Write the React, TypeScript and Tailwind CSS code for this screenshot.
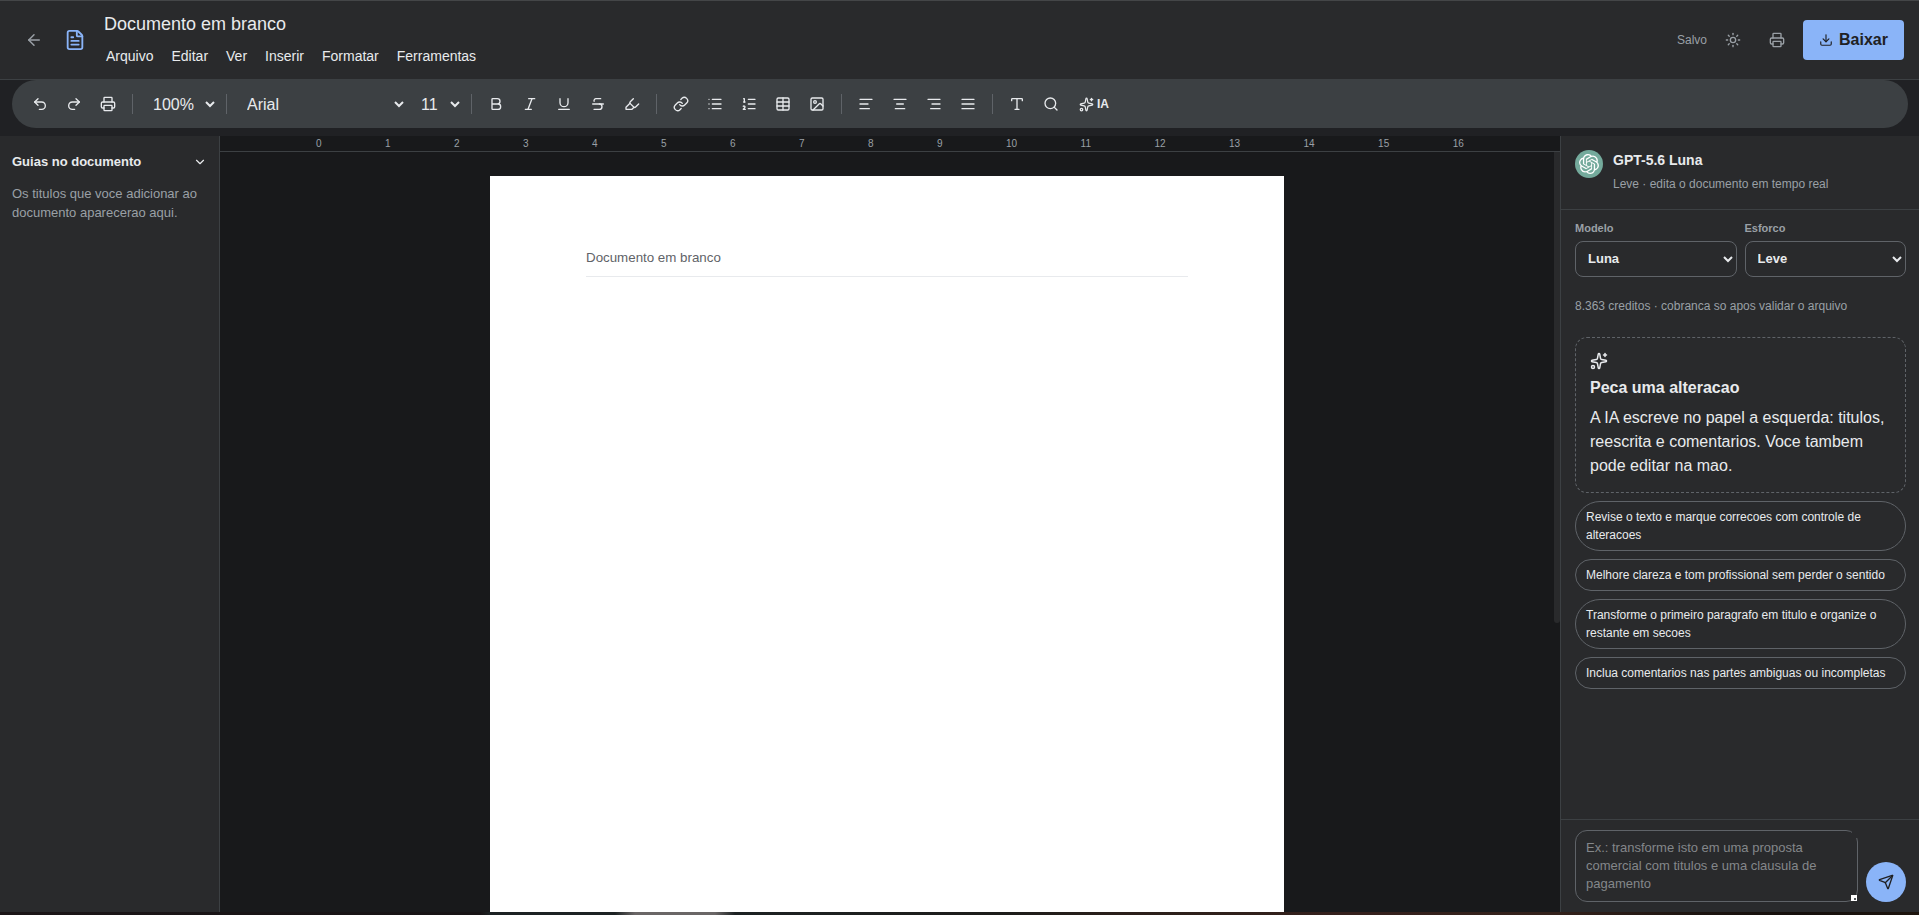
import { useState, type ReactNode } from 'react';
import {
  AlignCenter,
  AlignJustify,
  AlignLeft,
  AlignRight,
  ArrowLeft,
  Bold,
  ChevronDown,
  Download,
  FileText,
  Highlighter,
  Image,
  Italic,
  Link,
  List,
  ListOrdered,
  Printer,
  Redo2,
  Search,
  Send,
  Sparkles,
  Strikethrough,
  Sun,
  Table,
  Type,
  Underline,
  Undo2,
} from 'lucide-react';
import { SiOpenai } from 'react-icons/si';

const menus = ['Arquivo', 'Editar', 'Ver', 'Inserir', 'Formatar', 'Ferramentas'];

const suggestions = [
  'Revise o texto e marque correcoes com controle de alteracoes',
  'Melhore clareza e tom profissional sem perder o sentido',
  'Transforme o primeiro paragrafo em titulo e organize o restante em secoes',
  'Inclua comentarios nas partes ambiguas ou incompletas',
];

const toolGroups = [
  [Bold, Italic, Underline, Strikethrough, Highlighter],
  [Link, List, ListOrdered, Table, Image],
  [AlignLeft, AlignCenter, AlignRight, AlignJustify],
  [Type, Search],
];

function ToolButton({ children }: { children: ReactNode }) {
  return (
    <button className="flex size-8 shrink-0 items-center justify-center rounded hover:bg-white/10">
      {children}
    </button>
  );
}

function Divider() {
  return <span className="mx-1.5 h-5 w-px shrink-0 bg-[#5f6368]" />;
}

export default function App() {
  const [model, setModel] = useState('Luna');
  const [effort, setEffort] = useState('Leve');
  const [prompt, setPrompt] = useState('');

  return (
    <div className="h-[915px] overflow-hidden bg-[#1a1717] font-['Liberation_Sans',Arial,sans-serif] text-[#e8eaed]">
      <div className="flex h-[912px] w-[1920px] flex-col bg-[#202124]">
        {/* Header */}
        <header className="flex h-20 shrink-0 items-center border-y border-t-[#444648] border-b-[#3c4043] bg-[#292a2c] px-4">
          <button className="flex size-9 items-center justify-center text-[#9aa0a6]">
            <ArrowLeft size={18} />
          </button>
          <FileText size={22} className="ml-3 text-[#8ab4f8]" />
          <div className="ml-3 flex flex-col">
            <h1 className="pl-1.5 text-lg leading-[26px]">Documento em branco</h1>
            <nav className="mt-1.5 flex gap-0.5">
              {menus.map((menu) => (
                <button key={menu} className="h-[26px] px-2 text-sm">
                  {menu}
                </button>
              ))}
            </nav>
          </div>
          <div className="ml-auto flex items-center gap-2 text-[#9aa0a6]">
            <span className="text-xs">Salvo</span>
            <button className="flex size-9 items-center justify-center">
              <Sun size={16} />
            </button>
            <button className="flex size-9 items-center justify-center">
              <Printer size={16} />
            </button>
            <button className="flex h-10 w-[101px] items-center justify-center gap-1.5 rounded bg-[#8ab4f8] font-bold text-[#202124]">
              <Download size={14} />
              Baixar
            </button>
          </div>
        </header>

        {/* Toolbar */}
        <div className="mx-3 mb-2 flex h-12 shrink-0 items-center gap-0.5 rounded-3xl bg-[#3c4043] px-3">
          <ToolButton>
            <Undo2 size={16} />
          </ToolButton>
          <ToolButton>
            <Redo2 size={16} />
          </ToolButton>
          <ToolButton>
            <Printer size={16} />
          </ToolButton>
          <Divider />
          <select className="h-8 w-[77px] bg-transparent pl-2" defaultValue="100%">
            <option>100%</option>
          </select>
          <Divider />
          <select className="h-8 w-[172px] bg-transparent pl-2" defaultValue="Arial">
            <option>Arial</option>
          </select>
          <select className="h-8 w-[54px] bg-transparent pl-2" defaultValue="11">
            <option>11</option>
          </select>
          {toolGroups.map((group, i) => (
            <div key={i} className="flex items-center gap-0.5">
              <Divider />
              {group.map((Icon, j) => (
                <ToolButton key={j}>
                  <Icon size={16} />
                </ToolButton>
              ))}
            </div>
          ))}
          <button className="flex h-8 items-center gap-[3px] px-2.5 text-xs font-bold">
            <Sparkles size={15} />
            IA
          </button>
        </div>

        <div className="flex min-h-0 flex-1">
          {/* Outline */}
          <aside className="w-[220px] shrink-0 border-r border-[#3c4043] bg-[#292a2c] px-3 pt-4">
            <div className="flex items-center justify-between">
              <h2 className="text-[13px] leading-5 font-bold">Guias no documento</h2>
              <ChevronDown size={14} />
            </div>
            <p className="mt-3 text-[13px] leading-[19px] text-[#9aa0a6]">
              Os titulos que voce adicionar ao documento aparecerao aqui.
            </p>
          </aside>

          {/* Canvas */}
          <main className="flex min-w-0 flex-1 flex-col bg-[#18191b]">
            <div className="flex h-4 shrink-0 items-center justify-between border-b border-[#3c4043] px-24 pt-px text-[10px] leading-none text-[#9aa0a6]">
              {Array.from({ length: 17 }, (_, n) => (
                <span key={n}>{n}</span>
              ))}
            </div>
            <div className="flex min-h-0 flex-1">
              <div className="flex flex-1 justify-center overflow-hidden pt-6">
                <article className="h-[1123px] w-[794px] bg-white px-24 pt-[72px]">
                  <p className="border-b border-[#e8eaed] pb-2 text-[13.33px] leading-5 text-[#5f6368]">
                    Documento em branco
                  </p>
                </article>
              </div>
              <div className="w-1.5">
                <div className="h-[471px] rounded-b bg-[#292a2c]" />
              </div>
            </div>
          </main>

          {/* Assistant */}
          <aside className="flex w-[360px] shrink-0 flex-col border-l border-[#3c4043] bg-[#292a2c]">
            <div className="flex h-[74px] items-start gap-2.5 border-b border-[#3c4043] px-3.5 pt-3.5">
              <div className="flex size-7 items-center justify-center rounded-full bg-[#74aa9c] text-white">
                <SiOpenai size={20} />
              </div>
              <div>
                <h2 className="text-sm leading-5 font-bold">GPT-5.6 Luna</h2>
                <p className="mt-[5px] text-xs leading-[18px] text-[#9aa0a6]">
                  Leve · edita o documento em tempo real
                </p>
              </div>
            </div>

            <div className="grid grid-cols-2 gap-2 px-3.5 pt-2.5">
              <label className="flex flex-col gap-1 text-[11px] leading-[17px] font-bold text-[#9aa0a6]">
                Modelo
                <select
                  value={model}
                  onChange={(e) => setModel(e.target.value)}
                  className="h-9 rounded-lg border border-[#5f6368] bg-transparent px-2 pb-px text-[13px] text-[#e8eaed]"
                >
                  <option>Luna</option>
                </select>
              </label>
              <label className="flex flex-col gap-1 text-[11px] leading-[17px] font-bold text-[#9aa0a6]">
                Esforco
                <select
                  value={effort}
                  onChange={(e) => setEffort(e.target.value)}
                  className="h-9 rounded-lg border border-[#5f6368] bg-transparent px-2 pb-px text-[13px] text-[#e8eaed]"
                >
                  <option>Leve</option>
                </select>
              </label>
            </div>

            <p className="mt-5 px-3.5 text-xs leading-[18px] text-[#9aa0a6]">
              8.363 creditos · cobranca so apos validar o arquivo
            </p>

            <div className="mt-[22px] flex flex-1 flex-col gap-2 px-3.5">
              <div className="h-[156px] rounded-xl border border-dashed border-[#5f6368] p-3.5">
                <Sparkles size={18} />
                <h3 className="mt-1.5 leading-6 font-bold">Peca uma alteracao</h3>
                <p className="mt-1.5 leading-6">
                  A IA escreve no papel a esquerda: titulos, reescrita e comentarios. Voce tambem pode
                  editar na mao.
                </p>
              </div>
              {suggestions.map((text) => (
                <button
                  key={text}
                  onClick={() => setPrompt(text)}
                  className="rounded-full border border-[#5f6368] px-2.5 py-1.5 text-left text-xs leading-[18px]"
                >
                  {text}
                </button>
              ))}
            </div>

            <div className="flex items-end gap-2 border-t border-[#3c4043] px-3.5 py-2.5">
              <div className="relative h-[72px] flex-1">
                <textarea
                  value={prompt}
                  onChange={(e) => setPrompt(e.target.value)}
                  placeholder="Ex.: transforme isto em uma proposta comercial com titulos e uma clausula de pagamento"
                  className="block h-full w-full resize-none overflow-hidden rounded-xl border border-[#5f6368] px-2.5 py-2 text-[13px] leading-[18px] placeholder:text-[#84878a]"
                />
                <span className="absolute -top-px right-0 h-[9px] w-1.5 bg-[#292a2c]" />
                <span className="absolute right-px bottom-px flex size-1.5 items-end justify-end bg-white p-px">
                  <span className="size-0.5 bg-[#55585a]" />
                </span>
              </div>
              <button className="flex size-10 items-center justify-center rounded-full bg-[#8ab4f8] text-[#202124]">
                <Send size={16} />
              </button>
            </div>
          </aside>
        </div>
      </div>
      <div className="h-[3px] bg-[linear-gradient(90deg,#1b1517_0px,#171315_480px,#1d2223_490px,#1d2223_615px,#6a6666_635px,#6a6666_715px,#1d2223_735px,#1c1c1a_1000px,#2a1f1a_1120px,#35201c_1350px,#33211b_1560px,#1c1410_1700px,#150f0c_1800px,#1e150e_1919px)]" />
    </div>
  );
}
